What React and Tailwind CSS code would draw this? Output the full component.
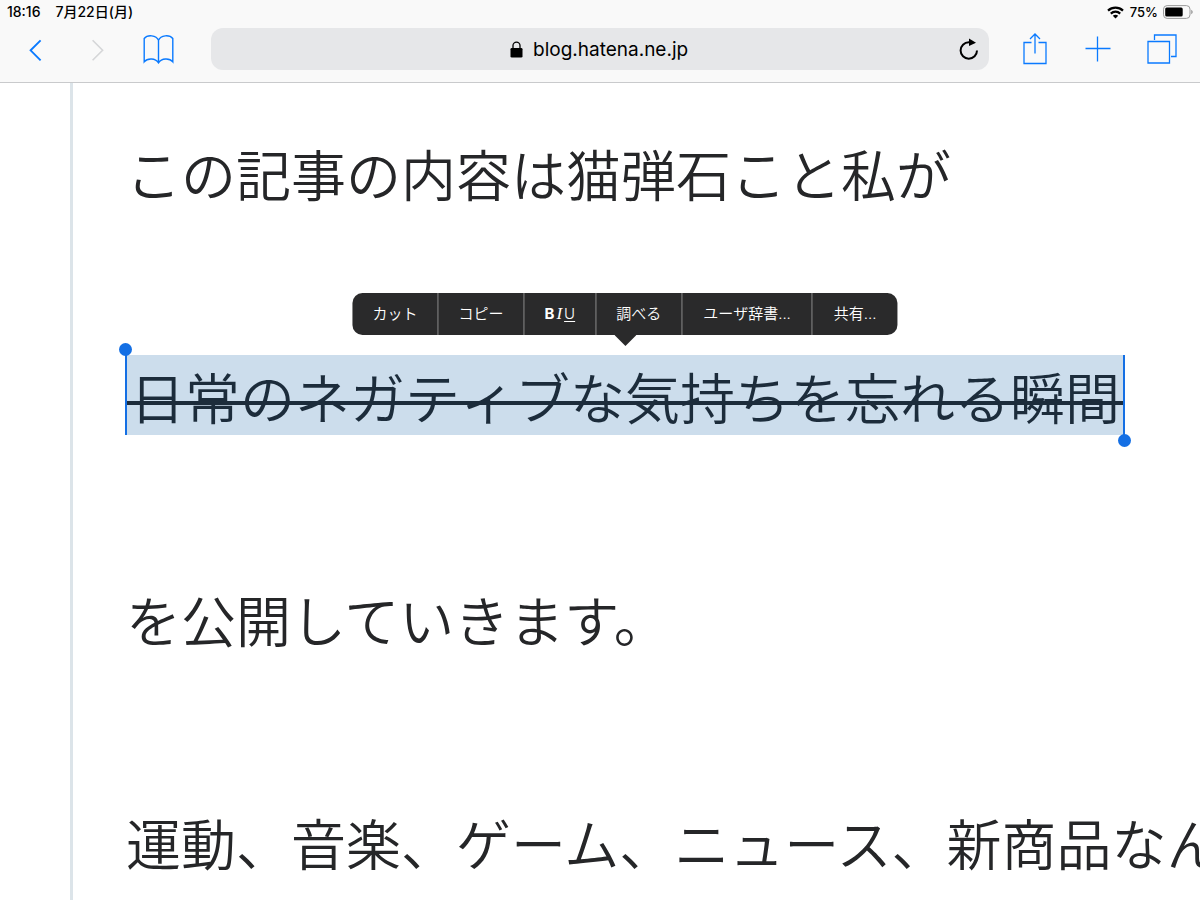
import { useState } from "react";

const blue = "text-[#0a7aff]";

function StatusBar() {
  return (
    <div className="flex h-6 items-center justify-between px-[7px] text-[14px] font-medium leading-6 text-black">
      <div className="flex gap-[15px]">
        <span>18:16</span>
        <span>7月22日(月)</span>
      </div>
      <div className="flex items-center gap-1">
        <svg className="mr-[2px]" width="17" height="13" viewBox="0 0 17 13" fill="none" stroke="currentColor" strokeWidth="2.200">
          <path d="M1 4.600C5.200.6 11.800.6 16 4.600" />
          <path d="M3.800 7.600c2.700-2.600 6.700-2.600 9.400 0" />
          <path d="M5.800 9.800c1.500-1.400 3.900-1.400 5.400 0L8.500 12.500Z" fill="currentColor" stroke="none" />
        </svg>
        <span className="text-[13px]">75%</span>
        <svg width="31" height="14" viewBox="0 0 31 14">
          <rect x="1.500" y=".6" width="26.500" height="12.800" rx="3.600" fill="none" stroke="#9a9a9a" />
          <rect x="3.200" y="2.400" width="17.500" height="9.200" rx="1.500" fill="#000" />
          <path d="M29.200 4.800c2 .8 2 3.600 0 4.400Z" fill="#9a9a9a" />
        </svg>
      </div>
    </div>
  );
}

function Toolbar() {
  const [url, setUrl] = useState("blog.hatena.ne.jp");

  return (
    <div className="flex h-[58px] items-center pb-3 pl-[29px] pr-[23px] pt-1">
      <div className={`flex w-[182px] shrink-0 items-center ${blue}`}>
        <button aria-label="戻る" className="mr-12 pt-[2px]">
          <svg width="14" height="22" viewBox="0 0 14 22" fill="none" stroke="currentColor" strokeWidth="1.900">
            <path d="M11.600 1.300 1.600 11.300l10 10" />
          </svg>
        </button>
        <button aria-label="進む" disabled className="mr-[38px] pt-[2px] text-[#d5d6d8]">
          <svg width="14" height="22" viewBox="0 0 14 22" fill="none" stroke="currentColor" strokeWidth="1.600">
            <path d="m1.600 1.300 10 10-10 10" />
          </svg>
        </button>
        <button aria-label="ブックマーク">
          <svg width="32" height="30" viewBox="0 0 32 30" fill="none" stroke="currentColor" strokeWidth="1.400">
            <path d="M15.500 28.800V6.300C13.300.9 4.500.4 1.200 4.500v23.300c3.300-4 11.300-3.800 14.300 1 3-4.800 11-5 14.300-1V4.500C26.500.4 17.700.9 15.500 6.300" />
          </svg>
        </button>
      </div>
      <div className="flex h-[42px] min-w-0 flex-1 items-center rounded-xl bg-[#e6e7e9] pr-[10px] text-black">
        <div className="flex flex-1 items-center justify-center gap-[10px] pl-[29px]">
          <svg width="13" height="17" viewBox="0 0 13 17">
            <path d="M3 8V4.600a3.500 3.500 0 0 1 7 0V8" fill="none" stroke="#000" strokeWidth="1.300" />
            <rect x=".5" y="7" width="12" height="9.500" rx="1.300" />
          </svg>
          <input
            aria-label="アドレス"
            value={url}
            onChange={e => setUrl(e.target.value)}
            className="w-[156px] bg-transparent pt-[2px] text-[19px] leading-6 outline-none"
          />
        </div>
        <button aria-label="再読み込み">
          <svg width="20" height="22" viewBox="0 0 20 22">
            <path d="M18 12.500a8.200 8.200 0 1 1-8.200-8.200h2" fill="none" stroke="#000" strokeWidth="2" />
            <path d="M10 .5v7.400L17 4.700Z" />
          </svg>
        </button>
      </div>
      <div className={`flex shrink-0 items-center pl-[34px] ${blue}`}>
        <button aria-label="共有" className="mr-[38px]">
          <svg width="24" height="32" viewBox="0 0 24 32" fill="none" stroke="currentColor" strokeWidth="1.300">
            <path d="M8.500 9.500H1v21h22v-21h-7.500M12 20.500V1M7 6l5-5 5 5" />
          </svg>
        </button>
        <button aria-label="新規タブ" className="mr-[36px]">
          <svg width="26" height="26" viewBox="0 0 26 26" fill="none" stroke="currentColor" strokeWidth="1.300">
            <path d="M12.500.5v25M.5 12.500h25" />
          </svg>
        </button>
        <button aria-label="タブ一覧">
          <svg width="30" height="30" viewBox="0 0 30 30" fill="none" stroke="currentColor" strokeWidth="1.300">
            <path d="M1 7.500h21.500V29H1ZM7.500 6V1h21.500v21.500h-5" />
          </svg>
        </button>
      </div>
    </div>
  );
}

function MenuButton({ children, wide }) {
  return (
    <button className={`h-full whitespace-nowrap ${wide ? "px-[21px]" : "px-5"}`}>
      {children}
    </button>
  );
}

function EditMenu() {
  return (
    <div className="absolute bottom-full left-1/2 mb-5 -translate-x-1/2 font-['Inter','Noto_Sans_CJK_JP',sans-serif] text-[15px] font-[350] leading-5 text-white">
      <div className="flex h-[42px] divide-x divide-[#8a8a8a] overflow-hidden rounded-[10px] bg-[#2a2a2b]">
        <MenuButton>カット</MenuButton>
        <MenuButton>コピー</MenuButton>
        <MenuButton>
          <span className="flex items-baseline gap-[2px]">
            <b className="font-bold">B</b>
            <i className="font-['Liberation_Serif',serif] text-[17px]">I</i>
            <u className="underline-offset-2">U</u>
          </span>
        </MenuButton>
        <MenuButton>調べる</MenuButton>
        <MenuButton wide>ユーザ辞書...</MenuButton>
        <MenuButton wide>共有...</MenuButton>
      </div>
      <svg className="absolute left-1/2 top-full -translate-x-1/2" width="22" height="11" viewBox="0 0 22 11">
        <path d="M0 0h22L11 11Z" fill="#2a2a2b" />
      </svg>
    </div>
  );
}

function Selection({ children }) {
  return (
    <div className="relative -ml-px w-max border-x-2 border-[#146fe4] bg-[#ccddec] px-[3px] text-[#1c2c3b] [font-kerning:none]">
      <s className="no-underline">{children}</s>
      {/* strike runs edge to edge of the selection */}
      <span className="absolute inset-x-0 top-[46px] h-1 bg-[#1c2c3b]" />
      <span className="absolute -left-2 -top-3 size-[13px] rounded-full bg-[#146fe4]" />
      <span className="absolute -bottom-3 -right-2 size-[13px] rounded-full bg-[#146fe4]" />
      <EditMenu />
    </div>
  );
}

export default function App() {
  return (
    <div className="flex h-screen flex-col overflow-hidden bg-white font-['Inter','Noto_Sans_CJK_JP',sans-serif]">
      <header className="shrink-0 border-b border-[#c9cacc] bg-[#f9f9f9]">
        <StatusBar />
        <Toolbar />
      </header>
      <main className="min-h-0 flex-1 overflow-hidden pl-[70px]">
        <article
          lang="ja"
          className="flex min-h-full flex-col gap-[143px] border-l-3 border-[#dce4e9] pl-[53px] pt-[49px] font-['Noto_Sans_CJK_JP',sans-serif] text-[55px] font-[350] leading-[80px] whitespace-nowrap text-[#252628]"
        >
          <p>この記事の内容は猫弾石こと私が</p>
          <Selection>日常のネガティブな気持ちを忘れる瞬間</Selection>
          <p>を公開していきます。</p>
          <p>運動、音楽、ゲーム、ニュース、新商品なん</p>
        </article>
      </main>
    </div>
  );
}
